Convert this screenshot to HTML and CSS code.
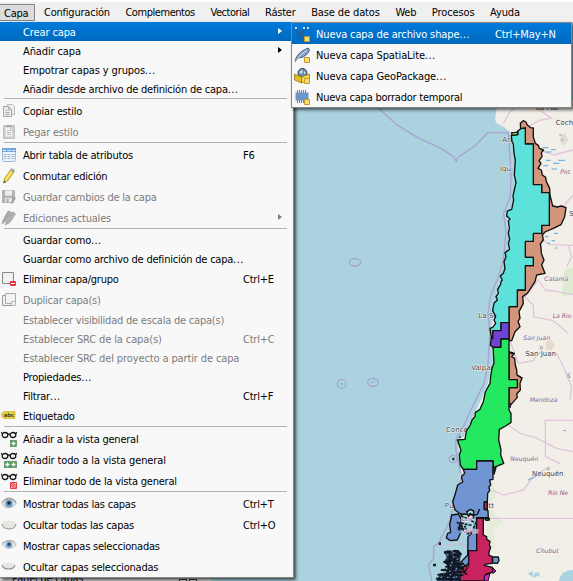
FILE: index.html
```
<!DOCTYPE html>
<html lang="es">
<head>
<meta charset="utf-8">
<title>Menú Capa</title>
<link rel="stylesheet" href="styles.css">
</head>
<body>
<div class="window">
<svg class="map" viewBox="0 0 573 581" width="573" height="581" aria-hidden="true">
<rect width="573" height="581" fill="#aad3df"/>
<g transform="translate(290 100) scale(.33333)" stroke-linejoin="round">
<path fill="#f2efe9" d="M570 0L576 33L598 45L614 50L618 68L640 80L660 95L672 150L680 240L665 320L650 340L658 430L645 500L620 580L610 650L600 700L610 790L590 860L550 950L520 1010L502 1020L514 1100L505 1160L490 1220L520 1245L555 1260L555 1340L520 1443H849V0Z"/>
<g fill="#dcebd0"><path d="M823 512L849 500V584L815 588L820 555Z"/><path opacity=".6" d="M590 1130L612 1150L618 1190L600 1210L620 1250L640 1265L612 1290L615 1350L590 1300Z"/></g>
<path fill="#e5dbcd" d="M768 725L785 720L795 738L783 752L768 748Z M812 108L825 100L835 120L820 138L810 125Z"/>
<path fill="#aad3df" d="M806 1443Q815 1408 849 1410V1443Z M713 1421l14-8 2 16 8-12 10 2 4 12-10-4-8 6z M570 24L620 24L614 65L576 40Z"/>
<g fill="none" stroke="#a9a3d0" stroke-width="4">
<path d="M265 24L320 74L382 112L460 149L490 170L499 185L503 173L556 137L593 98H655L663 220L661 290L641 340L648 395L640 480L625 530L601 590L594 640L600 700L594 790L582 850L540 935L520 980L497 1020L498 1055L515 1130L492 1190L481 1260L448 1325L431 1340V1375L416 1395L425 1443"/>
<ellipse cx="195" cy="487" rx="17" ry="11"/><circle cx="155" cy="852" r="13"/><ellipse cx="249" cy="847" rx="16" ry="12"/><ellipse cx="489" cy="1077" rx="12" ry="11"/>
</g>
<path fill="#7fb9d0" d="M152 849h6v6h-6zM243 845h5v5h-5zM251 842h4v4h-4z"/>
<g fill="none" stroke="#d9b7d8" stroke-width="4" opacity=".75">
<path d="M640 70L660 35L675 24M715 80L750 60L785 55L740 24M750 150L790 165L849 150M775 310L815 325L849 285M760 420L780 434L849 436M835 436L845 470L830 500M702 594L745 540L765 570L800 575L849 584M705 590L730 615L731 650L790 662L835 700M660 722L685 790L730 782L745 758L800 760L822 805L845 860L840 900M645 968L690 1000L735 1012L800 1045L849 1055M849 961H766V1070L810 1090M605 1170L640 1185L700 1170L730 1130L770 1105M600 1255H849M440 1340L510 1330L530 1340"/>
</g>
<g fill="none" stroke="#5aa4e8" stroke-width="3"><path d="M808 105h8M814 120h6M757 143h18M765 156h20M783 149h14M768 181h14M790 190h18M805 181h20M760 197h14M785 207h16M792 400h12M765 410h10M785 422h10M795 444h8M772 430h8M820 992h8"/></g>
<path stroke="#8dbbe0" stroke-width="5" fill="none" d="M714 1140L740 1128"/>
<g class="place">
<text x="738" y="31">La Paz</text><text x="797" y="75">Coch</text><text x="637" y="126">Ari</text><text x="630" y="213">Iqui</text><text x="838" y="347">S</text><text x="565" y="655">La Ser</text><text x="706" y="768">San Juan</text><text x="544" y="809">Valpar</text><text x="468" y="995">Concep</text><text x="726" y="1127">Neuquén</text><text x="464" y="1223" textLength="148">Puerto Montt</text>
</g>
<g class="region-name">
<text x="811" y="221">Pot</text><text x="763" y="543">Catama</text><text x="788" y="653">La Rio</text><text x="700" y="720">San Juan</text><text x="830" y="833">S</text><text x="719" y="905">Mendoza</text><text x="661" y="1084">Neuquén</text><text x="774" y="1185">Río Ne</text><text x="739" y="1358">Chubut</text>
</g>
<g fill="#f2efe9" stroke="#777" stroke-width="2"><circle cx="754" cy="743" r="4"/><circle cx="775" cy="1106" r="3.5"/></g>
<g stroke="#111" stroke-width="4">
<path fill="#d3957b" d="M692 88L691 70L700 62L708 66L712 75L722 83L730 84V112L736 130L745 136L748 145L761 150L754 158L756 170L747 182L753 190L744 205L754 210L757 225L767 232L769 245L779 265L780 285L788 318L802 321L814 318L828 323L824 350L813 374L790 385L765 396L757 405L760 420L751 432L753 442L754 460L762 480L755 495L765 520L740 525L735 545L712 580L698 590L700 610L687 635L690 655L684 664L690 680L675 695L665 722L657 722V620H682V570H706V497H730V472H706V424H730V400H755V376H778V278H755V254H730V132H706V84Z"/>
<path fill="#5ce2db" d="M664 106L683 104V94L692 86L706 84V132H730V254H755V278H778V376H755V400H730V424H706V472H730V497H706V570H682V620H657V668H633V692H608V716L604 712L600 685L608 682L617 670L612 660L617 650L608 632L612 610L622 600L618 590L625 580L623 568L632 553L633 545L637 540L631 528L640 520L645 505L642 485L648 470L645 458L659 448L655 430L659 418L655 400L658 385L655 362L660 357L650 348L652 333L665 328L671 300L669 288L674 265L678 248L673 224L676 180L672 160L670 132L666 125Z"/>
<path fill="#94df72" d="M665 98L680 97L683 94V104L666 106Z"/>
<path fill="#7043d8" d="M633 668H657V717H633V742H609L601 736L604 712L608 716V692H633Z"/>
<path fill="#d3957b" d="M657 755L673 760L665 770L674 775L676 795L680 810L681 825L696 834L690 850L691 870L680 882L682 892L668 908L657 918V863H682V839H657Z"/>
<path fill="#24e960" d="M609 742H633V717H657V839H682V863H657V930L663 940V967L647 978L628 988L626 1020L633 1050L632 1065L641 1090L611 1103L609 1083H560V1108H520L511 1095L508 1065L513 1050L502 1020L525 1018L529 993L541 975L546 960L555 950L556 938L570 928L580 905L586 876L600 850L602 830L606 805L612 790Z"/>
<path fill="#7194d3" d="M520 1108H560V1083H609V1138L599 1140L602 1155L597 1160L599 1172L593 1180L592 1205H583V1228L594 1232L595 1253H560V1352H536V1390L525 1398L514 1385L533 1365L534 1310L545 1300V1265L552 1245L512 1242L495 1230L488 1205L495 1185L503 1155L518 1146L514 1130L524 1120Z"/>
<path fill="#24552f" d="M609 1103L618 1103L612 1123Z"/>
<path fill="#7194d3" d="M485 1245L505 1242L515 1260L508 1275L512 1298L502 1320L481 1322L469 1314L473 1300L482 1297L479 1275Z"/>
<path fill="#c92261" d="M560 1255H580V1305L590 1310V1318L600 1324L598 1335L602 1342L596 1360L598 1366L607 1370V1390L588 1392L583 1396L607 1402L608 1417L588 1422L583 1443H510L512 1400L536 1398V1352H560Z"/>
<path fill="#c92261" d="M583 1206h9v22h-9z"/><path fill="#24e960" d="M584 1256l14-1v5l-10 1z"/>
<path fill="#7194d3" d="M608 1371L625 1371L627 1381L622 1390L608 1389Z"/><path fill="#d71fd8" stroke-width="3" d="M608 1403L618 1413L609 1420ZM583 1443V1427L600 1420L594 1443ZM658 911l5 1-2 11-4-5z"/>
<path fill="#aad3df" d="M530 1235L542 1228L552 1234L549 1246L540 1240L536 1250Z"/>
<path fill="none" d="M548 1245L562 1243L569 1227M511 1243L519 1250M657 758L674 762M752 147l9 5M681 825l16 10"/>
</g>
<path fill="#aad3df" d="M514 1250L557 1258L548 1290L530 1300L514 1290Z"/>
<g class="region-name"><text x="516" y="1264">Los</text><text x="511" y="1298">Lagos</text></g>
<path class="shore" d="M512 1248L530 1254M544 1262L558 1270L550 1285M500 1268L520 1270L508 1278L526 1280L505 1288L530 1286M524 1272L545 1276M503 1282L524 1292M530 1302L545 1298"/>
<path fill="#2b3b56" d="M462 1354L475 1350L490 1358L505 1350L515 1360L510 1380L518 1400L508 1418L514 1443H440L448 1425L468 1418L475 1400L462 1385L470 1372Z"/>
<path class="islands" d="M462 1358L500 1352L512 1362L475 1370L505 1380L460 1386L516 1392L468 1400L520 1404L455 1410L515 1416L445 1424L518 1425L440 1436L512 1438M475 1354L485 1370L470 1390L490 1405L465 1425L485 1443M500 1350L505 1370L492 1388L508 1400L495 1420L510 1443"/>
<path fill="none" stroke="#7194d3" stroke-width="4" stroke-dasharray="5 14" d="M470 1364L505 1376L476 1394L508 1409L462 1417L505 1432L450 1432"/>
<path fill="none" stroke="#111" stroke-width="4" d="M514 1405L525 1415L532 1402M517 1415l15 9"/>
<path fill="#222" d="M487 1073h6v8h-6zM446 1327h7v8h-7zM429 1391h9v8h-9zM507 1009h5v4h-5z"/>
</g>
</svg>

<nav class="menubar"><span class="tab active">Capa</span><span class="tab">Configuración</span><span class="tab tight">Complementos</span><span class="tab tight">Vectorial</span><span class="tab">Ráster</span><span class="tab loose">Base de datos</span><span class="tab">Web</span><span class="tab loose">Procesos</span><span class="tab loose">Ayuda</span></nav>

<div class="menu">
<div class="item selected"><i class="icon"></i><span class="loose">Crear capa</span><kbd></kbd><b class="arrow"></b></div>
<div class="item"><i class="icon"></i><span class="loose">Añadir capa</span><kbd></kbd><b class="arrow"></b></div>
<div class="item"><i class="icon"></i><span class="loose">Empotrar capas y grupos<em>...</em></span></div>
<div class="item"><i class="icon"></i><span>Añadir desde archivo de definición de capa<em>...</em></span></div>
<hr>
<div class="item tall"><svg class="icon" viewBox="0 0 16 16"><path d="M6.500 1.500h5l2 2v8h-7z" fill="#eee" stroke="#bbb"/><path d="M2.500 3.500h5l3 3v7h-8z" fill="#eee" stroke="#a5a5a5"/><path d="M7.500 4v3h3M4.500 7.500h2M4.500 9.500h4M4.500 11.500h4" fill="none" stroke="#aaa"/></svg><span>Copiar estilo</span></div>
<div class="item tall off"><svg class="icon" viewBox="0 0 16 16"><path d="M2.500 1.500h11v13h-11z" fill="#ccc" stroke="#c2c2c2"/><path d="M5 1h6v2h-6z" fill="#aaa"/><path d="M4.500 3.500h5l2 2v7h-7z" fill="#f4f4f4" stroke="#ddd"/><path d="M6 6.500h2M6 8.500h4M6 10.500h4M9.500 4v2.500h2" fill="none" stroke="#bbb"/></svg><span>Pegar estilo</span></div>
<hr>
<div class="item tall"><svg class="icon" viewBox="0 0 16 16"><rect x="1.500" y="1.500" width="13" height="13" rx="1" fill="#edf3fa" stroke="#9dbbe0"/><path d="M1 1h14v4H1z" fill="#79a5dd"/><path d="M2 3.500h3M6.500 3.500h3M11 3.500h3" stroke="#dceaff"/><path d="M2.500 7.500h3M6.500 7.500h3M10.500 7.500h3M2.500 9.500h3M6.500 9.500h3M10.500 9.500h3M2.500 11.500h3M6.500 11.500h3M10.500 11.500h3" stroke="#a5bad2"/></svg><span>Abrir tabla de atributos</span><kbd>F6</kbd></div>
<div class="item tall"><svg class="icon" viewBox="0 0 16 16"><path d="M9.500 2l3.500 2-6.500 9-3.500 2 .5-4.500z" fill="#eed83c" stroke="#99852b" stroke-width=".7"/><path d="M9.500 2l1-1.500 3 1.500-.5 2z" fill="#b9b9b9" stroke="#888" stroke-width=".6"/><path d="M10.500 4l-6 8" stroke="#fff385"/><path d="M2.900 12.800l-.5 2.500 2.200-1.200z" fill="#333"/></svg><span>Conmutar edición</span></div>
<div class="item tall off"><svg class="icon" viewBox="0 0 16 16"><path d="M1 1h12l1 1v8l-3 4H1z" fill="#b4b4b4"/><path d="M4 1.500h7v5H4z" fill="#eee"/><path d="M4 9h7v4H4z" fill="#e5e5e5"/><path d="M5.500 10h2v3h-2z" fill="#aaa"/><path d="M12 7l3 2-3 5-2 1z" fill="#a2a2a2"/></svg><span>Guardar cambios de la capa</span></div>
<div class="item tall off"><svg class="icon" viewBox="0 0 16 16"><path d="M7 1l3 1-5 9-4 3 1-4zM11 2l3 1-6 10-4 2 2-4z" fill="#a8a8a8" stroke="#999" stroke-width=".6"/><path d="M12 3l3 1-5 8-3 2 1-4z" fill="#b5b5b5"/></svg><span>Ediciones actuales</span><kbd></kbd><b class="arrow"></b></div>
<hr>
<div class="item"><i class="icon"></i><span>Guardar como<em>...</em></span></div>
<div class="item"><i class="icon"></i><span>Guardar como archivo de definición de capa<em>...</em></span></div>
<div class="item tall"><svg class="icon" viewBox="0 0 16 16"><path d="M1.500 1.500h11v11h-11z" fill="#f0f2ef" stroke="#858884"/><rect x="9" y="10" width="6" height="5" rx="1" fill="#e8323c"/><path d="M10 12.500h4" stroke="#fff"/></svg><span>Eliminar capa/grupo</span><kbd>Ctrl+E</kbd></div>
<div class="item tall off"><svg class="icon" viewBox="0 0 16 16"><path d="M1.500 3.500h11v10h-11z" fill="#eee" stroke="#999"/><path d="M4.500 1.500h10v10h-10z" fill="#f3f3f3" stroke="#aaa"/><path d="M10.500 9.500h4v4h-4z" fill="#eee" stroke="#bbb"/></svg><span>Duplicar capa(s)</span></div>
<div class="item off"><i class="icon"></i><span>Establecer visibilidad de escala de capa(s)</span></div>
<div class="item off"><i class="icon"></i><span class="loose">Establecer SRC de la capa(s)</span><kbd>Ctrl+C</kbd></div>
<div class="item off"><i class="icon"></i><span class="loose">Establecer SRC del proyecto a partir de capa</span></div>
<div class="item"><i class="icon"></i><span>Propiedades<em>...</em></span></div>
<div class="item"><i class="icon"></i><span>Filtrar<em>...</em></span><kbd>Ctrl+F</kbd></div>
<div class="item tall"><svg class="icon" viewBox="0 0 16 16"><path d="M3 3.500h11v7H3L.5 8.500v-3z" fill="#ecd342" stroke="#cbae35" stroke-width=".7"/><text x="2.800" y="9" class="tag">abc</text></svg><span>Etiquetado</span></div>
<hr>
<div class="item tall"><svg class="icon" viewBox="0 0 16 16"><g class="specs"><ellipse cx="4" cy="4" rx="2.800" ry="2.500"/><ellipse cx="12" cy="4" rx="2.800" ry="2.500"/><path d="M7 3.500q1-1 2 0M1 2.500L0 1M15 2.500L16 1"/></g><rect x="9.500" y="9.500" width="6" height="6" fill="#5d9b63" stroke="#3d7b45" stroke-width=".6"/><path d="M10.500 12.500h4M12.500 10.500v4" stroke="#fff" stroke-width="1.300"/></svg><span>Añadir a la vista general</span></div>
<div class="item tall"><svg class="icon" viewBox="0 0 16 16"><g class="specs"><ellipse cx="4" cy="4" rx="2.800" ry="2.500"/><ellipse cx="12" cy="4" rx="2.800" ry="2.500"/><path d="M7 3.500q1-1 2 0M1 2.500L0 1M15 2.500L16 1"/></g><path d="M3.500 9.500h12v6h-12z" fill="#5d9b63" stroke="#3d7b45" stroke-width=".6"/><path d="M4.500 12.500h4M6.500 10.500v4M10.500 12.500h4M12.500 10.500v4" stroke="#fff" stroke-width="1.300"/></svg><span class="loose">Añadir todo a la vista general</span></div>
<div class="item tall"><svg class="icon" viewBox="0 0 16 16"><g class="specs"><ellipse cx="4" cy="4" rx="2.800" ry="2.500"/><ellipse cx="12" cy="4" rx="2.800" ry="2.500"/><path d="M7 3.500q1-1 2 0M1 2.500L0 1M15 2.500L16 1"/></g><path d="M9.500 9.500h6v6h-6z" fill="#f8c6c8" stroke="#e33b44"/><circle cx="12.500" cy="12.500" r="1.800" fill="none" stroke="#e33b44"/><path d="M10.500 10.500l4 4" stroke="#e33b44"/></svg><span>Eliminar todo de la vista general</span></div>
<hr>
<div class="item tall"><svg class="icon" viewBox="0 0 16 16"><path d="M1 7.500q3-5 8-4.500 4 0 6 4.500-3 4.500-7.500 4.500-4 0-6.500-4.500z" fill="#e6e6e2" stroke="#aaa" stroke-width=".8"/><circle cx="8" cy="7.500" r="3.800" fill="#719bc9"/><circle cx="8" cy="7" r="1.800" fill="#182a43"/><path d="M1 6.500q4-5.500 9-4 4 1 5 4" fill="none" stroke="#888"/></svg><span>Mostrar todas las capas</span><kbd>Ctrl+T</kbd></div>
<div class="item tall"><svg class="icon" viewBox="0 0 16 16"><path d="M1 5q7-3 14 0 0 7-7 7t-7-7z" fill="#e6e6e3"/><path d="M1 7q1 5 7 5t7-5" fill="none" stroke="#8d8d8d" stroke-width="1.100"/></svg><span>Ocultar todas las capas</span><kbd>Ctrl+O</kbd></div>
<div class="item tall"><svg class="icon" viewBox="0 0 16 16"><path d="M1 6.500q3-4 8-3.500 4 0 6 4-3 3.500-7 3.500-4 0-7-4z" fill="#e6e6e2" stroke="#bbb" stroke-width=".8"/><circle cx="8" cy="6.700" r="3.200" fill="#79a5d5"/><circle cx="8" cy="6.200" r="1.500" fill="#254265"/><path d="M1 5.500q4-4 9-3 4 1 5 3" fill="none" stroke="#aaa"/></svg><span>Mostrar capas seleccionadas</span></div>
<div class="item tall"><svg class="icon" viewBox="0 0 16 16"><path d="M1 5q6-3 13 0 0 5-6.500 5t-6.500-5z" fill="#e6e6e3"/><path d="M1 6q1 4 6.500 4t6.500-4" fill="none" stroke="#969696" stroke-width="1.100"/></svg><span>Ocultar capas seleccionadas</span></div>
</div>

<div class="dock"><span>Panel de capas</span><i></i><i></i></div>

<div class="submenu">
<div class="item tall selected"><svg class="icon" viewBox="0 0 16 16"><path d="M2 2l4 10 4-9.500" fill="none" stroke="#365981" stroke-width="1.500"/><path d="M1 1h2v2H1zM9 1h2v2H9zM13 1h2v2h-2z" fill="#cfdcec"/><path class="new" d="M10.500 10.500h5v5h-5z"/></svg><span class="loose">Nueva capa de archivo shape<em>...</em></span><kbd class="loose">Ctrl+May+N</kbd></div>
<div class="item tall"><svg class="icon" viewBox="0 0 16 16"><path d="M1 15q1-9 13-14 3 2-1 6-3 4-9 4z" fill="#8ba6c8" stroke="#34506f" stroke-width=".9"/><path d="M1 15Q6 7 13 3" fill="none" stroke="#dbe6f2" stroke-width=".8"/><path class="new" d="M10.500 10.500h5v5h-5z"/></svg><span class="loose">Nueva capa SpatiaLite<em>...</em></span></div>
<div class="item tall"><svg class="icon" viewBox="0 0 16 16"><circle cx="8.500" cy="5" r="4.500" fill="#6f8dac" stroke="#36475b"/><path d="M5 4l3-2 1 2-2 2zM10 3l2 2-2 1z" fill="#d0dce8"/><path d="M.5 6l7 3v6l-7-3z" fill="#e5bd22" stroke="#8a6b0b" stroke-width=".7"/><path d="M7.500 9l8-3v6l-8 3z" fill="#f4d845" stroke="#8a6b0b" stroke-width=".7"/><path class="new" d="M10.500 10.500h5v5h-5z"/></svg><span class="loose">Nueva capa GeoPackage<em>...</em></span></div>
<div class="item tall"><svg class="icon" viewBox="0 0 16 16"><path d="M3.500 1v13M5.500 1v13M7.500 1v13M9.500 1v13M11.500 1v13" stroke="#697f9c"/><path d="M1.500 3.500h13v8h-13z" fill="#6c94c9"/><path class="new" d="M10.500 10.500h5v5h-5z"/></svg><span>Nueva capa borrador temporal</span></div>
</div>
</div>
</body>
</html>
```
FILE: styles.css
```
* { box-sizing: border-box; }
body { margin: 0; }
.window {
  position: relative;
  width: 573px;
  height: 581px;
  overflow: hidden;
  font: 11px/17px "DejaVu Sans Condensed", "DejaVu Sans", sans-serif;
  font-stretch: condensed;
  letter-spacing: -0.220px;
  color: #000;
  white-space: nowrap;
}
.map { position: absolute; top: 0; left: 0; display: block; }
.place text { font: 21px "DejaVu Sans", sans-serif; fill: #444; stroke: #f5f5f5; stroke-width: 3px; paint-order: stroke; letter-spacing: 0; }
.region-name text { font: italic 18.500px "DejaVu Sans", sans-serif; fill: #8a608b; stroke: #f5f0f2; stroke-width: 2px; paint-order: stroke; letter-spacing: 0; }
.islands { fill: none; stroke: #10161e; stroke-width: 6px; stroke-dasharray: 11 2; }
.shore { fill: none; stroke: #18202a; stroke-width: 5px; stroke-dasharray: 9 3; }
.loose { letter-spacing: -0.120px; }
.tight { letter-spacing: -0.450px; }

.menubar {
  position: relative;
  display: flex;
  height: 22px;
  padding-top: 2px;
  background: #f0f0f0;
  border-top: 2px solid #fdfdfd;
}
.tab { height: 18px; padding: 0 7.800px; line-height: 18px; }
.tab.active {
  width: 35px;
  height: 17px;
  margin-right: 1.200px;
  padding: 0 0 0 4px;
  line-height: 17px;
  background: #dcdcdc;
  border: 1px solid #858585;
  border-left: 0;
}

.menu {
  position: relative;
  z-index: 2;
  width: 294px;
  height: 556px;
  background: #f8f8f8;
  border-right: 1px solid #858585;
  border-bottom: 1px solid #858585;
  box-shadow: 2px 2px 3px rgba(0, 0, 0, .65);
}
.item {
  display: grid;
  grid-template-columns: 23px 220px 35px 1fr;
  align-items: center;
  height: 19px;
}
.item.tall { height: 21px; }
.item span, .item kbd { padding-top: 2px; }
.item em { font-style: normal; letter-spacing: 0.400px; }
.item.off { color: #7c7c7c; }
.item.selected { color: #fff; background: linear-gradient(#007bdc, #0069bd); }
.icon { width: 16px; height: 16px; margin-left: 1px; margin-top: 1px; }
kbd { font: inherit; }
.arrow {
  width: 0;
  height: 0;
  margin-top: -2px;
  border: 3px solid transparent;
  border-left: 4px solid currentColor;
  border-right: 0;
}
hr { height: 2px; margin: 0 6px 0 4px; border: 0; border-top: 1px solid #b2b2b2; }
.specs { fill: #f8f8f8; stroke: #171717; stroke-width: 1.300px; }
.tag { font: bold 5.500px "DejaVu Sans", sans-serif; fill: #4c461e; letter-spacing: -0.2px; }
.new { fill: #f6dc74; stroke: #c39a27; }

.dock {
  position: relative;
  z-index: 1;
  display: flex;
  gap: 2px;
  width: 211px;
  height: 14px;
  padding-left: 12px;
  line-height: 2px;
  background: #d9d9d9;
}
.dock span { width: 165px; }
.dock i { width: 8px; height: 9px; margin-top: 1px; border: 1px solid #333; }

.submenu {
  position: absolute;
  z-index: 3;
  top: 22px;
  left: 291px;
  width: 281px;
  height: 86px;
  border: 1px solid #858585;
  background: #f8f8f8;
  box-shadow: 2px 2px 3px rgba(0, 0, 0, .6);
}
.submenu .item { grid-template-columns: 24px 179px 1fr; }
.submenu .icon { margin-left: 2px; }
```
